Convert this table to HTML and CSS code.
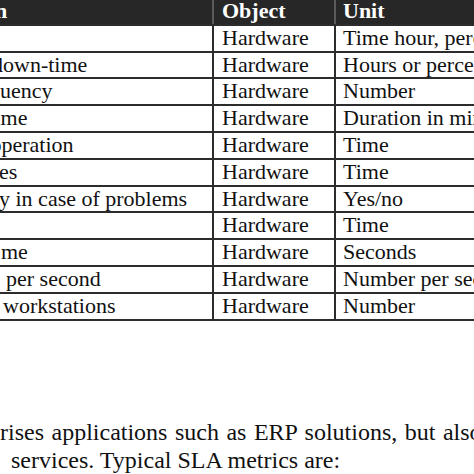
FILE: index.html
```html
<!DOCTYPE html>
<html>
<head>
<meta charset="utf-8">
<link rel="stylesheet" href="styles.css">
</head>
<body>
<div class="page">
  <div class="table">
    <div class="row head">
      <div class="c1"><span class="t-head">n</span></div>
      <div class="c2">Object</div>
      <div class="c3">Unit</div>
    </div>
    <div class="row">
      <div class="c1"></div>
      <div class="c2">Hardware</div>
      <div class="c3">Time hour, percentage</div>
    </div>
    <div class="row">
      <div class="c1"><span class="t-d">down-time</span></div>
      <div class="c2">Hardware</div>
      <div class="c3">Hours or percentage</div>
    </div>
    <div class="row">
      <div class="c1"><span class="t-q">quency</span></div>
      <div class="c2">Hardware</div>
      <div class="c3">Number</div>
    </div>
    <div class="row">
      <div class="c1"><span class="t-i">ime</span></div>
      <div class="c2">Hardware</div>
      <div class="c3">Duration in minutes</div>
    </div>
    <div class="row">
      <div class="c1"><span class="t-o">operation</span></div>
      <div class="c2">Hardware</div>
      <div class="c3">Time</div>
    </div>
    <div class="row">
      <div class="c1"><span class="t-e">es</span></div>
      <div class="c2">Hardware</div>
      <div class="c3">Time</div>
    </div>
    <div class="row">
      <div class="c1"><span class="t-e">y in case of problems</span></div>
      <div class="c2">Hardware</div>
      <div class="c3">Yes/no</div>
    </div>
    <div class="row">
      <div class="c1"></div>
      <div class="c2">Hardware</div>
      <div class="c3">Time</div>
    </div>
    <div class="row">
      <div class="c1"><span class="t-m">me</span></div>
      <div class="c2">Hardware</div>
      <div class="c3">Seconds</div>
    </div>
    <div class="row">
      <div class="c1"><span class="t-p">per second</span></div>
      <div class="c2">Hardware</div>
      <div class="c3">Number per second</div>
    </div>
    <div class="row">
      <div class="c1"><span class="t-w">workstations</span></div>
      <div class="c2">Hardware</div>
      <div class="c3">Number</div>
    </div>
  </div>
  <div class="para">
    <div class="line1">rises applications such as ERP solutions, but also</div>
    <div class="line2">services. Typical SLA metrics are:</div>
  </div>
</div>
</body>
</html>
```

FILE: styles.css
```css
html, body {
  margin: 0;
  padding: 0;
  background: #fff;
}
body {
  width: 474px;
  height: 474px;
  overflow: hidden;
  font-family: "Liberation Serif", "Times New Roman", serif;
  color: #111;
}
.page {
  width: 474px;
}
.table {
  width: 640px;
  font-size: 22px;
}
.row {
  display: grid;
  grid-template-columns: 212px 122px 306px;
  height: 24.82px;
  line-height: 24.82px;
  border-bottom: 2px solid #2c2c2c;
  white-space: nowrap;
}
.row > div {
  overflow: hidden;
}
.c2, .c3 {
  border-left: 2px solid #2c2c2c;
}
.c2 {
  padding-left: 8px;
}
.c3 {
  padding-left: 7px;
}
.head {
  height: 23.8px;
  line-height: 22px;
  background: #272727;
  color: #fff;
  font-weight: bold;
}
.head .c2, .head .c3 {
  border-left-color: #5a5a5a;
}
.c1 span {
  display: block;
}
.t-head { margin-left: -5px; }
.t-d { margin-left: -8px; }
.t-q { margin-left: -11px; }
.t-i { margin-left: -5.5px; }
.t-o { margin-left: -9.5px; }
.t-e { margin-left: -1px; }
.t-m { margin-left: 1px; }
.t-p { margin-left: 6px; }
.t-w { margin-left: 3px; }

.para {
  margin-top: 97px;
  font-size: 24px;
  line-height: 28px;
  white-space: nowrap;
}
.line1 {
  word-spacing: 1.5px;
}
.line2 {
  padding-left: 11px;
}
```
